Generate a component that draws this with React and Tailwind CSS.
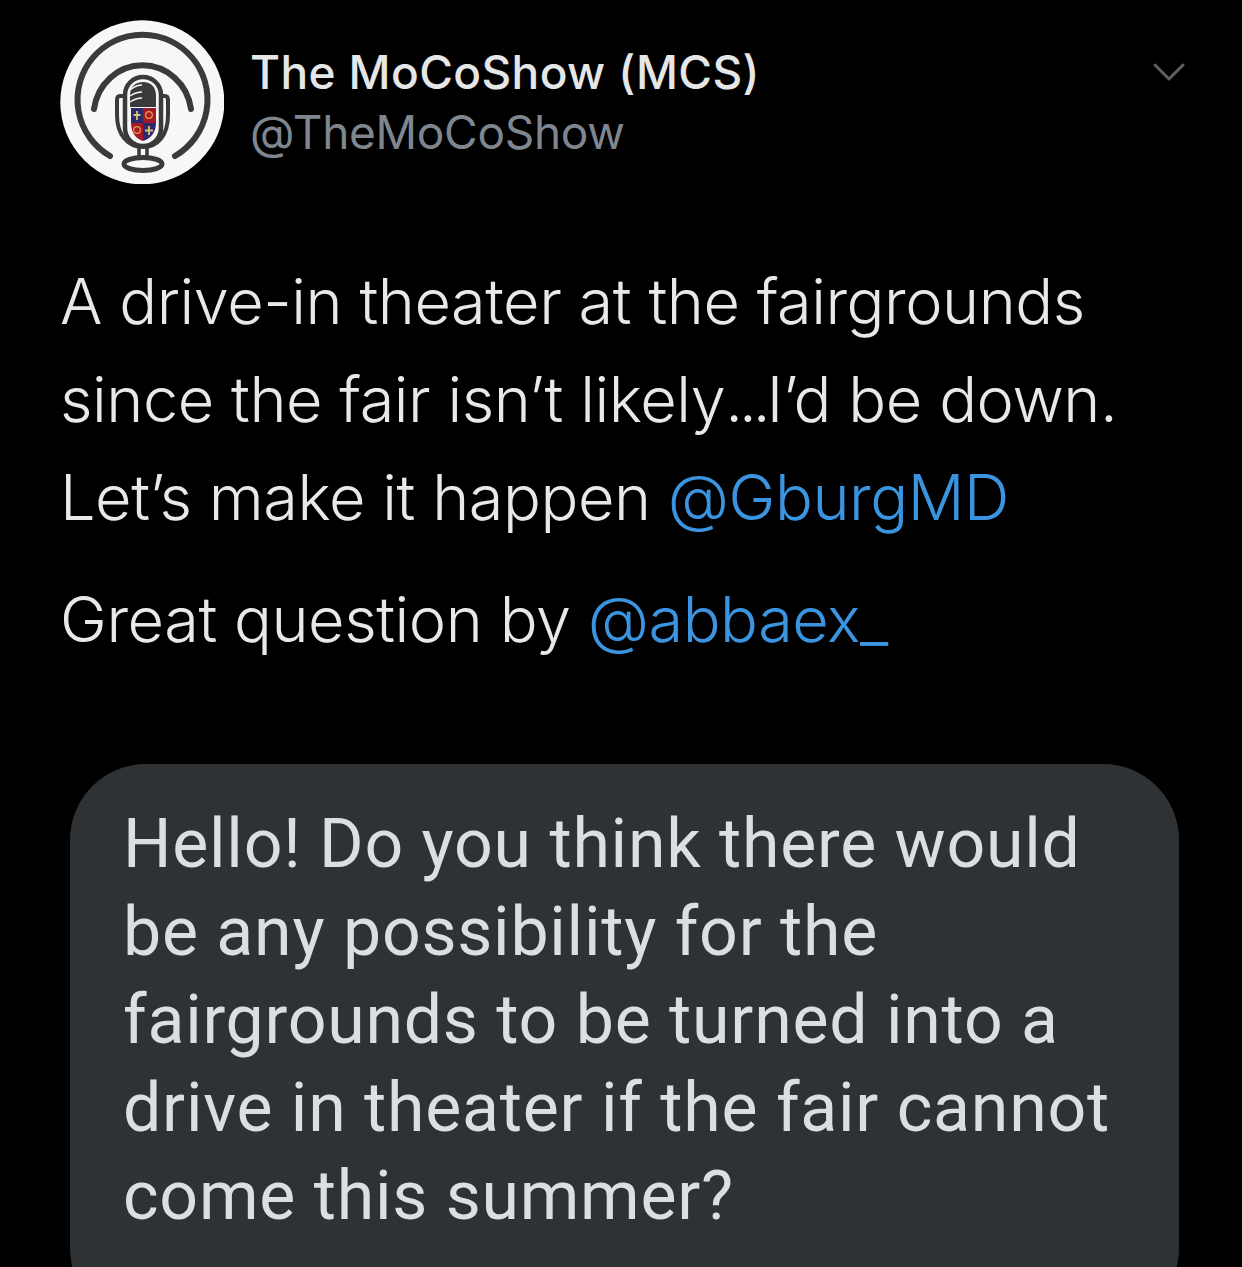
const sans = "font-['Inter',sans-serif]"

function Logo() {
  return (
    <svg viewBox="20 20 164 164" className="w-[164px] h-[164px] shrink-0">
      <circle cx="102.3" cy="102.3" r="82" fill="#f7f7f7" />
      <g fill="none" stroke="#3a3a3a" strokeLinecap="round">
        <path d="M70 156A65 65 0 1 1 135 156" strokeWidth="6" />
        <path d="M54 109A49 51 0 0 1 151 109" strokeWidth="6" />
        <rect x="85" y="77" width="36" height="69" rx="18" strokeWidth="4.5" />
        <path d="M84 96H80Q77 96 77 100V115C77 135 88 147 103 147C118 147 128 135 128 115V100Q128 96 125 96H121" strokeWidth="4" />
        <path d="M99 147V158M107 147V158" strokeWidth="3.5" />
        <ellipse cx="103" cy="164" rx="19" ry="6.500" strokeWidth="5" />
      </g>
      <path d="M90 107V96C90 87 95 82 103 82C111 82 116 87 116 96V107Z" fill="#3a3a3a" />
      <path d="M90 90Q96 85 102 85M90 96Q96 92 102 92M90 102Q96 98 102 98" fill="none" stroke="#f7f7f7" strokeWidth="1.3" />
      <path d="M91 108H103V123H91Z" fill="#2c2a6b" />
      <path d="M103 108H116V123H103Z" fill="#a5182c" />
      <path d="M91 123H103V141C96 139 91 133 91 123Z" fill="#a5182c" />
      <path d="M103 123H116C116 133 110 139 103 141Z" fill="#2c2a6b" />
      <path d="M97 111V120M93.500 115H100.500" stroke="#d9c27a" strokeWidth="1.8" />
      <circle cx="109" cy="115" r="3.300" fill="#a5182c" stroke="#e8a33a" strokeWidth="1.2" />
      <circle cx="97" cy="130" r="3.300" fill="#a5182c" stroke="#e8a33a" strokeWidth="1.2" />
      <path d="M109 126V135M105 130.500H113" stroke="#d9c27a" strokeWidth="1.8" />
    </svg>
  )
}

export default function App() {
  return (
    <div className={`w-[1242px] h-[1267px] overflow-hidden bg-black ${sans}`}>
      <div className="flex pl-[60px] pr-[56px] pt-5">
        <Logo />
        <div className="ml-[26px] pt-[22px] flex-1">
          <div className="text-[46px] leading-[60px] font-medium text-[#e4e6e8] tracking-[0.4px]">The MoCoShow (MCS)</div>
          <div className="text-[46px] leading-[60px] text-[#7e878f] tracking-[-0.3px]">@TheMoCoShow</div>
        </div>
        <svg viewBox="0 0 34 20" className="w-[34px] h-[20px] mt-[42px]" fill="none" stroke="#5f5f5f" strokeWidth="3" strokeLinecap="round" strokeLinejoin="round">
          <path d="M3 3L17 17L31 3" />
        </svg>
      </div>
      <div className="pl-[60px] pt-[68px] text-[63px] leading-[98px] font-light text-[#e6e8ea] tracking-[-0.45px]">
        <div>A drive-in theater at the fairgrounds</div>
        <div>since the fair isn’t likely<span className="tracking-[-4px]">...</span>I’d be down.</div>
        <div>Let’s make it happen <span className="text-[#3b94e0]">@GburgMD</span></div>
        <div className="mt-6">Great question by <span className="text-[#3b94e0]">@abbaex_</span></div>
      </div>
      <div className="ml-[70px] mt-[96px] w-[1109px] h-[560px] rounded-[76px] bg-[#2f3235] pl-[53px] pt-[36px] font-['Roboto',sans-serif] text-[68px] leading-[88px] text-[#dcdee0] tracking-[0.75px]">
        <div>Hello! Do you think there would</div>
        <div>be any possibility for the</div>
        <div>fairgrounds to be turned into a</div>
        <div>drive in theater if the fair cannot</div>
        <div>come this summer?</div>
      </div>
    </div>
  )
}
